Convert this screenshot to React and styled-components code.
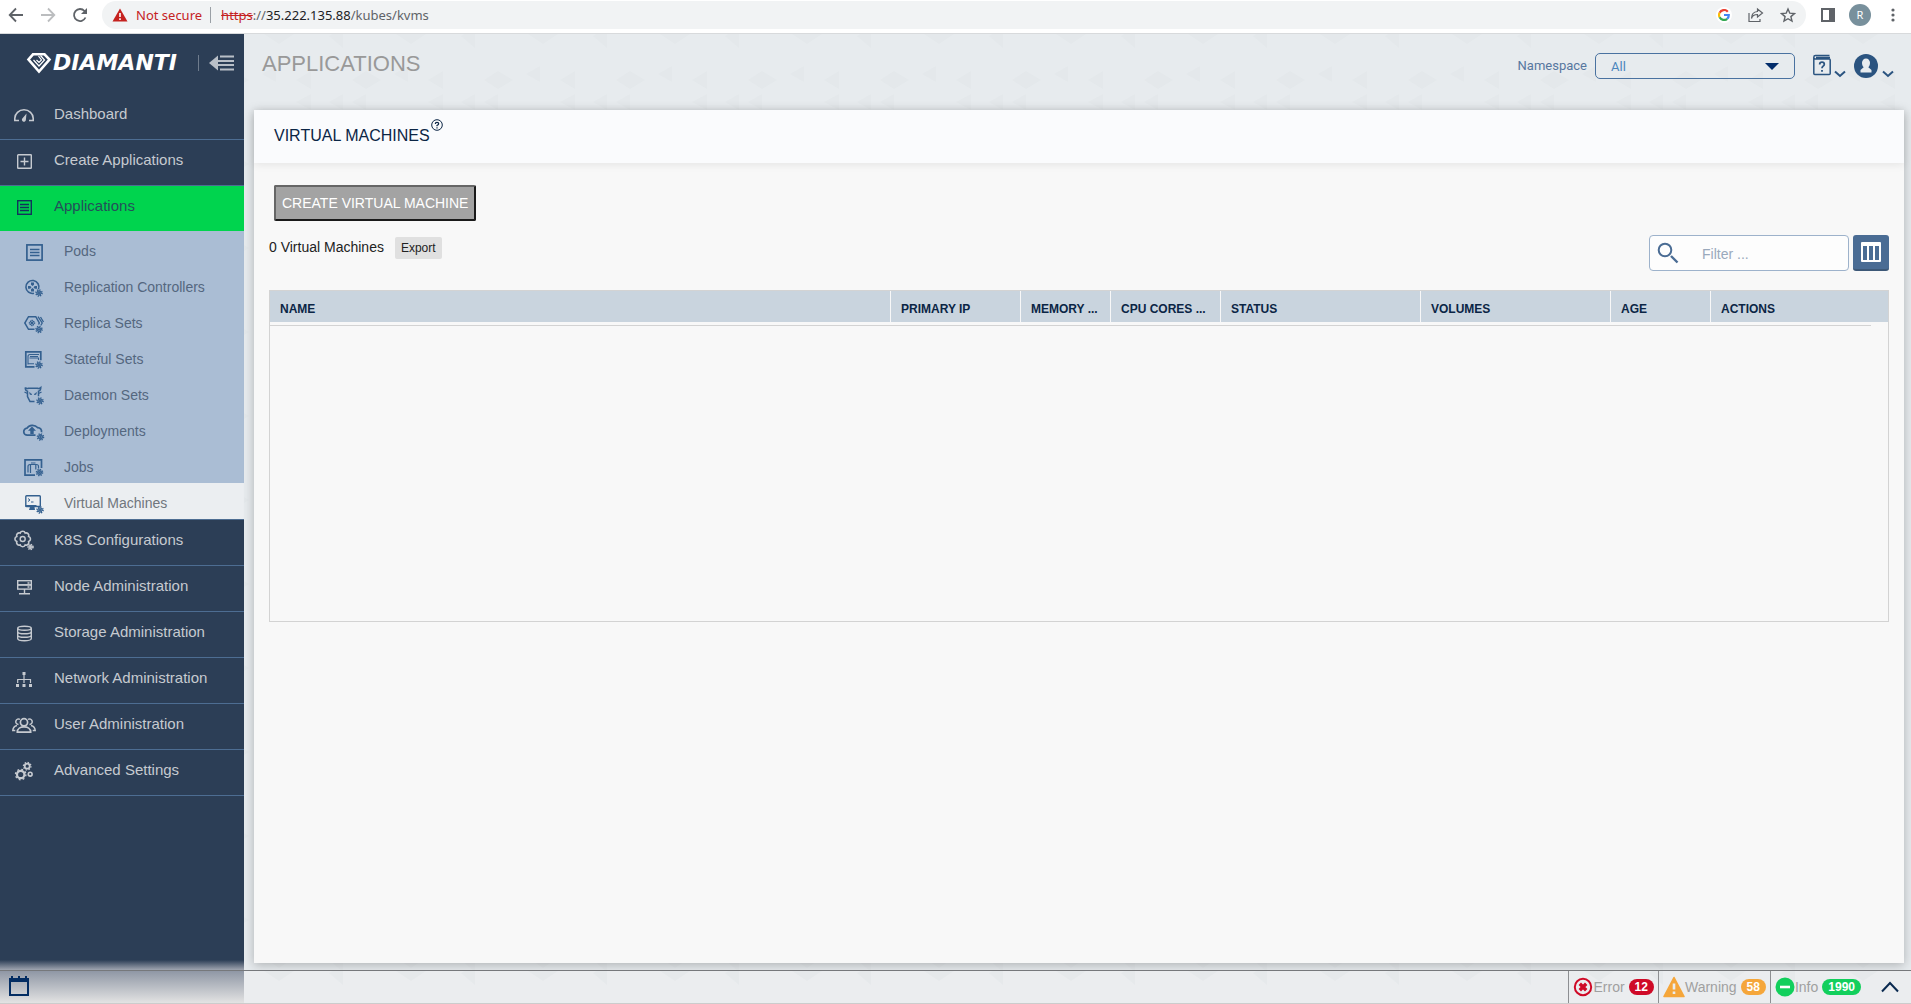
import styled, { createGlobalStyle, css } from 'styled-components'

const GlobalStyle = createGlobalStyle`
  *, *::before, *::after { box-sizing: border-box; }
  body {
    margin: 0;
    font-family: "Liberation Sans", Arial, sans-serif;
    font-size: 14px;
    color: #222;
  }
  a { color: inherit; text-decoration: none; }
  button { font-family: inherit; cursor: pointer; }
  ul { list-style: none; margin: 0; padding: 0; }
  svg { display: block; flex: none; }
`

// small helm wheel shown in the corner of the kubernetes icons
const Helm = ({ x = 17, y = 18, r = 3 }) => (
  <g transform={`translate(${x} ${y})`} strokeWidth="1">
    <circle r={r - 1} />
    <circle r={r} strokeDasharray="1.2 1.16" strokeWidth="1.6" />
    <path d={`M0-${r}V${r}M-${r} 0H${r}M-2-2L2 2M2-2L-2 2`} strokeWidth=".8" />
  </g>
)

const icons = {
  dashboard: (
    <g>
      <path d="M7 16.5H2.8v-2.2A9 8.3 0 0 1 21.2 14.3v2.2H17" strokeWidth="1.6" />
      <path d="M14.500 9.500l-.6 6.200a2 2 0 1 1-3.100-1.700z" fill="currentColor" stroke="none" />
    </g>
  ),
  create: (
    <g strokeWidth="1.400">
      <rect x="5.700" y="4.700" width="13.600" height="13.600" rx=".6" />
      <path d="M12.500 7.500v8M8.500 11.500h8" />
    </g>
  ),
  apps: (
    <g strokeWidth="1.400">
      <rect x="5.700" y="4.700" width="13.600" height="13.600" />
      <path d="M8 8.500h9M8 11.500h9M8 14.500h9" />
    </g>
  ),
  pods: (
    <g strokeWidth="1.700">
      <rect x="4.900" y="5.900" width="15.200" height="15.200" />
      <path d="M8 10.500h9.500M8 13.500h9.500M8 16.500h9.500" strokeWidth="1.300" />
    </g>
  ),
  replication: (
    <g>
      <path d="M16.500 14.300A6.500 6.500 0 1 0 12 18.300" strokeWidth="1.600" />
      <g fill="currentColor" stroke="none">
        <path d="M9 7.500h3v2.200l-1.500 1.300L9 9.700zM6 11h2.200l1.300 1.300-1.300 1.500H6zM15 11h-2.200l-1.300 1.300 1.300 1.500H15zM9 16.500h3v-2.200L10.500 13 9 14.300z" />
      </g>
      <Helm x={17} y={18} />
    </g>
  ),
  replica: (
    <g>
      <path d="M12.500 18.300H6.500L2.800 12l3.700-6.300h7.300l3.500 6.300-.8 1.500" strokeWidth="1.500" />
      <path d="M16 5.700l4.200 6.300-1.500 2.500M18.500 6l3 5" strokeWidth="1.300" />
      <path d="M10 8.800v6.400M6.800 12h6.400M8 10l4 4M12 10l-4 4" strokeWidth="1" />
      <circle cx="10" cy="12" r="2.600" strokeWidth="1" strokeDasharray="1.200 .8" />
      <Helm x={17} y={18.500} />
    </g>
  ),
  stateful: (
    <g>
      <path d="M12.500 19.800H3.800V4.800h15v8.500" strokeWidth="1.700" />
      <path d="M6 17.500V9.500q0-2 2-2h9M7.500 11h9v2M8 9.500h8M6.500 16.800h5.500" strokeWidth="1.100" />
      <Helm x={17} y={18} />
    </g>
  ),
  daemon: (
    <g>
      <path d="M3.200 4.500q0 3 2.300 3.800v5.200l2.500 5h4.500M3.200 4.500q1.500 1.500 3.300.7h9q1.800.8 3.300-.7 0 3-2.300 3.800v5" strokeWidth="1.500" />
      <path d="M2.500 9l3 1.500M19.500 9l-3 1.500" strokeWidth="1.300" />
      <path d="M7.500 9.500l2.500 2H8zM14.500 9.500l-2.500 2h2z" fill="currentColor" strokeWidth=".6" />
      <Helm x={18} y={18} />
    </g>
  ),
  deployments: (
    <g>
      <path d="M13.500 16.200H5.500a3.500 3.500 0 0 1-.5-7 6 5 0 0 1 10.500-.6 3.800 3.800 0 0 1 4 4.600" strokeWidth="1.700" />
      <path d="M10 7.500l4 4.200h-2.300V15H8.300v-3.300H6z" fill="currentColor" stroke="none" />
      <Helm x={18.500} y={18} />
    </g>
  ),
  jobs: (
    <g>
      <path d="M13 20.100H3V4.900h16.500v8" strokeWidth="1.700" />
      <path d="M6 17.500v-6q0-2 2-2h6.500q2 0 2 2v2M8.500 9.500V18M13.800 9.500v5M9 8h4.500" strokeWidth="1.200" />
      <Helm x={17.500} y={17.500} />
    </g>
  ),
  vms: (
    <g>
      <rect x="3.800" y="4.800" width="14.500" height="10.700" rx=".8" strokeWidth="1.400" />
      <path d="M3.500 14h11v2h-2l.5 3H7l1-3H3.500z" fill="currentColor" stroke="none" />
      <path d="M6 7.500l2 1.500-2 1.500M9 11h2.500" strokeWidth="1" />
      <Helm x={18} y={19} />
    </g>
  ),
  k8s: (
    <g>
      <path d="M8.200 3.100a2.600 2.600 0 0 1 5 0 2.600 2.600 0 0 1 3.400 3.400 2.600 2.600 0 0 1 0 5 2.600 2.600 0 0 1-3.400 3.400 2.600 2.600 0 0 1-5 0 2.600 2.600 0 0 1-3.400-3.400 2.600 2.600 0 0 1 0-5 2.600 2.600 0 0 1 3.400-3.400z" strokeWidth="1.600" />
      <circle cx="10.700" cy="9" r="2.500" strokeWidth="1.400" />
      <Helm x={18.500} y={17} r={2.500} />
    </g>
  ),
  node: (
    <g strokeWidth="1.400">
      <rect x="5.700" y="4.700" width="13.600" height="4.200" />
      <rect x="5.700" y="8.900" width="13.600" height="4.200" />
      <path d="M12.500 13v5M7 17.700h11M15.500 7h2M15.500 11h2" />
    </g>
  ),
  storage: (
    <g strokeWidth="1.400">
      <ellipse cx="12.500" cy="6.200" rx="6.800" ry="2" />
      <path d="M5.700 6.200v10.300c0 3 13.600 3 13.600 0V6.200M5.700 9.700c0 2.800 13.600 2.800 13.600 0M5.700 13.200c0 2.800 13.600 2.800 13.600 0" />
    </g>
  ),
  network: (
    <g>
      <path d="M12 6v6M5.700 15v-3.500h12.800V15M12 11v4" strokeWidth="1.200" />
      <path d="M10.500 4h3v3h-3zM4 16h3v3H4zM10.500 16h3v3h-3zM17 16h3v3h-3z" fill="currentColor" stroke="none" />
    </g>
  ),
  users: (
    <g strokeWidth="1.700">
      <circle cx="12" cy="8.300" r="3.600" />
      <path d="M5.300 18.200c0-7 13.400-7 13.400 0z" />
      <path d="M8 5.300a2.800 2.800 0 1 0-1.500 5.200M16 5.300a2.800 2.800 0 1 1 1.500 5.200M5 11.500q-4 1-4.200 5h2.500M19 11.500q4 1 4.200 5h-2.500" strokeWidth="1.500" />
    </g>
  ),
  settings: (
    <g>
      <circle cx="8.700" cy="14.500" r="3.700" strokeWidth="2.200" />
      <circle cx="8.700" cy="14.500" r="5.200" strokeWidth="1.400" strokeDasharray="1.800 2.280" />
      <circle cx="15.200" cy="6.200" r="2.500" strokeWidth="1.800" />
      <circle cx="15.200" cy="6.200" r="3.800" strokeWidth="1.200" strokeDasharray="1.400 1.580" />
      <circle cx="18.200" cy="14.200" r="1.900" strokeWidth="1.600" />
    </g>
  ),
}

const Glyph = ({ name }) => (
  <svg width="24" height="24" viewBox="0 0 24 24" fill="none" stroke="currentColor" aria-hidden="true">
    {icons[name]}
  </svg>
)

const resources = [
  { icon: 'pods', label: 'Pods' },
  { icon: 'replication', label: 'Replication Controllers' },
  { icon: 'replica', label: 'Replica Sets' },
  { icon: 'stateful', label: 'Stateful Sets' },
  { icon: 'daemon', label: 'Daemon Sets' },
  { icon: 'deployments', label: 'Deployments' },
  { icon: 'jobs', label: 'Jobs' },
  { icon: 'vms', label: 'Virtual Machines', current: true },
]

const menu = [
  { icon: 'dashboard', label: 'Dashboard' },
  { icon: 'create', label: 'Create Applications' },
  { icon: 'apps', label: 'Applications', active: true, children: resources },
  { icon: 'k8s', label: 'K8S Configurations' },
  { icon: 'node', label: 'Node Administration' },
  { icon: 'storage', label: 'Storage Administration' },
  { icon: 'network', label: 'Network Administration' },
  { icon: 'users', label: 'User Administration' },
  { icon: 'settings', label: 'Advanced Settings' },
]

const columns = [
  { label: 'NAME' },
  { label: 'PRIMARY IP', width: 130 },
  { label: 'MEMORY (GB)', short: 'MEMORY ...', width: 90 },
  { label: 'CPU CORES (CORES)', short: 'CPU CORES ...', width: 110 },
  { label: 'STATUS', width: 200 },
  { label: 'VOLUMES', width: 190 },
  { label: 'AGE', width: 100 },
  { label: 'ACTIONS', width: 160 },
]

const BrowserBar = () => (
  <Browser>
    <NavButtons>
      <IconButton aria-label="Back">
        <svg width="16" height="16" viewBox="0 0 16 16" fill="none" stroke="#5f6368" strokeWidth="1.800"><path d="M15 8H2M8 1.500L1.700 8 8 14.500" /></svg>
      </IconButton>
      <IconButton aria-label="Forward">
        <svg width="16" height="16" viewBox="0 0 16 16" fill="none" stroke="#bbbdbf" strokeWidth="1.800"><path d="M1 8h13M8 1.500L14.300 8 8 14.500" /></svg>
      </IconButton>
      <IconButton aria-label="Reload">
        <svg width="16" height="16" viewBox="0 0 16 16" fill="none" stroke="#5f6368" strokeWidth="1.800"><path d="M13.500 10.500A6 6 0 1 1 12.500 4L14 5.800" /><path d="M15 1v6H9z" fill="#5f6368" stroke="none" /></svg>
      </IconButton>
    </NavButtons>
    <AddressBar>
      <svg width="16" height="14" viewBox="0 0 16 14"><path d="M8 .5L15.500 13.500H.5z" fill="#c5221f" /><path d="M8 5v4M8 10.300v1.700" stroke="#fff" strokeWidth="1.600" /></svg>
      <NotSecure>Not secure</NotSecure>
      <Url><s>https</s>://<b>35.222.135.88</b>/kubes/kvms</Url>
      <AddressActions>
        <IconButton aria-label="Google">
          <GoogleDot>
            <svg width="12" height="12" viewBox="0 0 12 12" fill="none" strokeWidth="2.200">
              <path d="M9.800 2.700A5 5 0 0 0 1.600 3.700" stroke="#ea4335" />
              <path d="M1.600 3.700a5 5 0 0 0 0 4.600" stroke="#fbbc05" />
              <path d="M1.600 8.300a5 5 0 0 0 7.600 1.500" stroke="#34a853" />
              <path d="M9.200 9.800A5 5 0 0 0 10.800 6H6" stroke="#4285f4" />
            </svg>
          </GoogleDot>
        </IconButton>
        <IconButton aria-label="Share">
          <svg width="16" height="16" viewBox="0 0 16 16" fill="none" stroke="#5f6368" strokeWidth="1.200"><path d="M1 6v8.500h11V12M9.500 2l5 4-5 4V7.500q-5 0-6 4Q3.500 5 9.500 4.500z" /></svg>
        </IconButton>
        <IconButton aria-label="Bookmark">
          <svg width="16" height="16" viewBox="0 0 16 16" fill="none" stroke="#5f6368" strokeWidth="1.400"><path d="M8 2l1.800 4.200 4.600.4-3.500 3 1.100 4.500L8 11.700l-4 2.400 1.100-4.500-3.500-3 4.600-.4z" /></svg>
        </IconButton>
      </AddressActions>
    </AddressBar>
    <IconButton aria-label="Side panel">
      <svg width="16" height="16" viewBox="0 0 16 16"><path d="M1 1h14v14H1zM3 3v10h6V3z" fill="#5f6368" fillRule="evenodd" /></svg>
    </IconButton>
    <Avatar aria-label="Profile">R</Avatar>
    <IconButton aria-label="Menu">
      <svg width="4" height="16" viewBox="0 0 4 16" fill="#5f6368"><circle cx="2" cy="3" r="1.600" /><circle cx="2" cy="8" r="1.600" /><circle cx="2" cy="13" r="1.600" /></svg>
    </IconButton>
  </Browser>
)

const Sidebar = () => (
  <Side>
    <SideHeader>
      <Brand href="#">
        <svg width="26" height="22" viewBox="0 0 26 22" fill="none" stroke="#fff">
          <path d="M7 2.300h11.500L23.500 7.500 13 19.500 2.500 7.500z" strokeWidth="2.600" />
          <path d="M7.500 8l5.500 6 5.500-6-4-4.500M10.500 8l2.500 2.500L15.500 8l-3-4" strokeWidth="1.200" />
        </svg>
        <BrandName>DIAMANTI</BrandName>
      </Brand>
      <Collapse aria-label="Collapse menu">
        <svg width="26" height="16" viewBox="0 0 26 16"><path d="M0 8L9 .5v15z" fill="#b9bfc7" /><path d="M11 1.500h14M9 6h16M9 10h16M11 14.500h14" stroke="#b9bfc7" strokeWidth="2" /></svg>
      </Collapse>
    </SideHeader>
    <nav>
      <ul>
        {menu.map(({ icon, label, active, children }) => (
          <MenuItem key={label}>
            <MenuLink href="#" $active={active}>
              <Glyph name={icon} />
              <span>{label}</span>
            </MenuLink>
            {children && (
              <SubMenu>
                {children.map((item) => (
                  <li key={item.label}>
                    <SubLink href="#" $current={item.current}>
                      <Glyph name={item.icon} />
                      <span>{item.label}</span>
                    </SubLink>
                  </li>
                ))}
              </SubMenu>
            )}
          </MenuItem>
        ))}
      </ul>
    </nav>
  </Side>
)

const Chevron = () => (
  <svg width="12" height="8" viewBox="0 0 12 8" fill="none" stroke="#2b5480" strokeWidth="2"><path d="M1 1.500l5 4.500 5-4.500" /></svg>
)

const TopBar = () => (
  <Top>
    <PageTitle>APPLICATIONS</PageTitle>
    <NamespaceLabel htmlFor="namespace">Namespace</NamespaceLabel>
    <NamespaceSelect id="namespace" defaultValue="all">
      <option value="all">All</option>
    </NamespaceSelect>
    <TopButton aria-label="Help">
      <svg width="20" height="24" viewBox="0 0 20 24" fill="none" stroke="#2b5480">
        <path d="M1.800 3.500V19.500q0 1 1 1h14.400q1 0 1-1V6q0-1-1-1H3.500Q1.800 5 1.800 3.300 1.800 1.600 3.500 1.600H17.500M4 3.500h14" strokeWidth="1.500" />
        <path d="M7.700 10.500q0-2.300 2.300-2.300t2.300 2q0 1.300-1.300 2-1 .6-1 2M10 16v1.800" strokeWidth="1.800" />
      </svg>
      <Chevron />
    </TopButton>
    <TopButton aria-label="Account">
      <svg width="24" height="24" viewBox="0 0 24 24"><circle cx="12" cy="12" r="12" fill="#2b5480" /><path d="M12 4.500a4 4.300 0 0 0-4 4.300c0 2 .8 3.500 1.700 4.500L6.500 16v2.500h11V16l-3.200-2.700c.9-1 1.700-2.500 1.700-4.500a4 4.300 0 0 0-4-4.300z" fill="#e8ecef" /></svg>
      <Chevron />
    </TopButton>
  </Top>
)

const MachineTable = () => (
  <TableBox>
    <Table>
      <colgroup>
        {columns.map(({ label, width }) => <col key={label} width={width} />)}
        <col width="17" />
      </colgroup>
      <thead>
        <tr>
          {columns.map(({ label, short }) => <th key={label} title={label}>{short || label}</th>)}
          <th aria-hidden="true"></th>
        </tr>
      </thead>
      <tbody>
        <tr>
          <td colSpan={columns.length}></td>
        </tr>
      </tbody>
    </Table>
  </TableBox>
)

const StatusBar = () => (
  <Footer>
    <FooterSide>
      <IconButton aria-label="Events">
        <svg width="20" height="20" viewBox="0 0 20 20"><path d="M2 0h2v2h5V0h2v2h5V0h2v2h2v18H0V2h2zM2 6v12h16V6z" fill="#032d63" fillRule="evenodd" /></svg>
      </IconButton>
    </FooterSide>
    <FooterMain>
      <Status>
        <svg width="20" height="20" viewBox="0 0 20 20"><circle cx="10" cy="10" r="8.200" fill="none" stroke="#cf0a27" strokeWidth="2" /><path d="M6.800 6.800l6.400 6.400M13.200 6.800l-6.400 6.400" stroke="#cf0a27" strokeWidth="3.400" /></svg>
        Error <Badge $color="#cf0a27">12</Badge>
      </Status>
      <Status>
        <svg width="22" height="22" viewBox="0 0 22 22"><path d="M11 1.500L21 20.500H1z" fill="#f5a63a" stroke="#f5a63a" strokeWidth="1.600" strokeLinejoin="round" /><path d="M11 7.500v6M11 15.500v2.500" stroke="#e9edf0" strokeWidth="2.600" /></svg>
        Warning <Badge $color="#f5a63a">58</Badge>
      </Status>
      <Status>
        <svg width="20" height="20" viewBox="0 0 20 20"><circle cx="10" cy="10" r="9.500" fill="#12cf5c" /><path d="M5 10h10" stroke="#fff" strokeWidth="2.600" /></svg>
        Info <Badge $color="#12cf5c">1990</Badge>
      </Status>
      <IconButton aria-label="Expand">
        <svg width="18" height="12" viewBox="0 0 18 12" fill="none" stroke="#0a2a50" strokeWidth="2"><path d="M1 10.500L9 2l8 8.500" /></svg>
      </IconButton>
    </FooterMain>
  </Footer>
)

export default function App() {
  return (
    <Page>
      <GlobalStyle />
      <BrowserBar />
      <Workspace>
        <Sidebar />
        <Main>
          <TopBar />
          <Panel>
            <PanelHeader>
              <PanelTitle>VIRTUAL MACHINES</PanelTitle>
              <HelpButton aria-label="About virtual machines">
                <svg width="12" height="12" viewBox="0 0 12 12" fill="none" stroke="#0b2545"><circle cx="6" cy="6" r="5.300" /><path d="M4.300 5q0-1.700 1.700-1.700T7.700 4.800Q7.700 5.700 6 6.500v.8M6 8.200v1.300" strokeWidth="1.200" /></svg>
              </HelpButton>
            </PanelHeader>
            <PanelBody>
              <CreateButton>CREATE VIRTUAL MACHINE</CreateButton>
              <Toolbar>
                <Summary>
                  <span>0 Virtual Machines</span>
                  <ExportButton>Export</ExportButton>
                </Summary>
                <FilterBox>
                  <svg width="22" height="22" viewBox="0 0 22 22" fill="none" stroke="#4a6c94"><circle cx="8" cy="8" r="6.300" strokeWidth="2" /><path d="M14 14l6.500 6.500" strokeWidth="2.400" /></svg>
                  <input type="text" placeholder="Filter ..." aria-label="Filter" />
                </FilterBox>
                <ColumnsButton aria-label="Choose columns">
                  <svg width="20" height="20" viewBox="0 0 20 20"><path d="M1 0h18q1 0 1 1v18q0 1-1 1H1q-1 0-1-1V1q0-1 1-1zM2 4v14h4V4zM8 4v14h4V4zM14 4v14h4V4z" fill="#fff" fillRule="evenodd" /></svg>
                </ColumnsButton>
              </Toolbar>
              <MachineTable />
            </PanelBody>
          </Panel>
        </Main>
      </Workspace>
      <StatusBar />
    </Page>
  )
}

const pattern = css`
  background-color: #e7ebee;
  background-image: url("data:image/svg+xml,%3Csvg xmlns='http://www.w3.org/2000/svg' width='132' height='84'%3E%3Cg fill='%23dfe4e7' fill-opacity='.4'%3E%3Cpath d='M20 0h30L35 10zM85 2l14-8v20zM18 40l14-8v16zM52 46l15-9v18zM108 46l14-9 15 9-15 9zM-24 46l14-9 15 9-15 9zM52 68l15-8v16zM85 68l14-8v16zM108 68l14-8v16z'/%3E%3C/g%3E%3C/svg%3E");
`

const Page = styled.div`
  display: flex;
  flex-direction: column;
  min-height: 100vh;
`

const IconButton = styled.button`
  display: flex;
  align-items: center;
  padding: 0;
  border: none;
  background: none;
`

const Browser = styled.header`
  display: flex;
  align-items: center;
  height: 34px;
  padding: 0 16px 4px 8px;
  border-bottom: 1px solid #d8dadc;
  background-color: #fff;
  font-family: "Noto Sans", "Open Sans", sans-serif;
  font-size: 13px;
`

const NavButtons = styled.div`
  display: flex;
  gap: 16px;
  margin-right: 14px;
`

const AddressBar = styled.div`
  display: flex;
  flex: 1;
  align-items: center;
  height: 28px;
  margin-right: 14px;
  padding: 0 10px;
  border-radius: 14px;
  background-color: #f1f3f4;
`

const NotSecure = styled.span`
  margin-left: 8px;
  padding-right: 8px;
  border-right: 1px solid #9aa0a6;
  line-height: 16px;
  color: #c5221f;
`

const Url = styled.span`
  flex: 1;
  margin-left: 10px;
  color: #5f6368;

  s { color: #c5221f; }
  b { font-weight: 400; color: #202124; }
`

const AddressActions = styled.div`
  display: flex;
  align-items: center;
  gap: 16px;
`

const GoogleDot = styled.span`
  padding: 2px;
  border-radius: 50%;
  background-color: #fff;
`

const Avatar = styled.button`
  width: 22px;
  height: 22px;
  margin: 0 20px 0 13px;
  padding: 0;
  border: none;
  border-radius: 50%;
  background-color: #78909c;
  font-size: 11px;
  color: #fff;
`

const Workspace = styled.div`
  display: flex;
  flex: 1;
`

const Side = styled.aside`
  flex: none;
  width: 244px;
  background: linear-gradient(to top, #a0a5b0, #2c3e56 10px);
  color: #c6cad0;
`

const SideHeader = styled.div`
  display: flex;
  align-items: center;
  height: 60px;
  padding: 0 9px 2px 26px;
`

const Brand = styled.a`
  display: flex;
  flex: 1;
  align-items: center;
  gap: 1px;
`

const BrandName = styled.span`
  font: italic bold 22px/22px "DejaVu Sans", sans-serif;
  color: #fff;
`

const Collapse = styled(IconButton)`
  padding-left: 10px;
  border-left: 1px solid #6f7c8d;
`

const MenuItem = styled.li`
  border-bottom: 1px solid #4d6d92;
`

const MenuLink = styled.a`
  display: flex;
  align-items: center;
  gap: 18px;
  height: 45px;
  padding: 0 0 2px 12px;
  font-size: 15px;
  background-color: ${({ $active }) => ($active ? '#00d44e' : 'transparent')};
  color: ${({ $active }) => ($active ? '#12335c' : 'inherit')};

  span {
    padding-bottom: 4px;
    color: ${({ $active }) => ($active ? '#24505a' : 'inherit')};
  }
`

const SubMenu = styled.ul`
  background-color: #aabdd4;
`

const SubLink = styled.a`
  display: flex;
  align-items: center;
  gap: 18px;
  height: 36px;
  padding: 4px 0 0 22px;
  background-color: ${({ $current }) => ($current ? '#ebeef1' : 'transparent')};
  color: ${({ $current }) => ($current ? '#70767d' : '#54677f')};

  svg { color: #34608f; }
`

const Main = styled.main`
  ${pattern}
  display: flex;
  flex: 1;
  flex-direction: column;
  min-width: 0;
  padding: 0 7px 7px 10px;
`

const Top = styled.div`
  display: flex;
  align-items: center;
  height: 76px;
  padding: 0 10px 12px 8px;
`

const PageTitle = styled.h1`
  flex: 1;
  margin: 0;
  padding-bottom: 4px;
  font-size: 22px;
  font-weight: 400;
  color: #999;
`

const NamespaceLabel = styled.label`
  margin-right: 8px;
  padding-bottom: 2px;
  font-family: Roboto, sans-serif;
  font-size: 13px;
  color: #57779f;
`

const NamespaceSelect = styled.select`
  appearance: none;
  width: 200px;
  height: 26px;
  margin-right: 17px;
  padding: 0 15px;
  border: 1px solid #4a72a0;
  border-radius: 5px;
  background: url("data:image/svg+xml,%3Csvg xmlns='http://www.w3.org/2000/svg' width='14' height='7'%3E%3Cpath d='M0 0h14L7 7z' fill='%23032d6b'/%3E%3C/svg%3E") no-repeat right 15px center;
  font-family: Roboto, sans-serif;
  font-size: 13px;
  color: #4c86bd;
`

const TopButton = styled(IconButton)`
  align-items: flex-end;
  gap: 2px;
  height: 24px;

  & + & { margin-left: 8px; gap: 4px; }
`

const Panel = styled.section`
  flex: 1;
  background-color: #f8f8f8;
  box-shadow: 0 2px 10px rgba(0, 0, 0, .25);
`

const PanelHeader = styled.div`
  display: flex;
  align-items: flex-start;
  height: 53px;
  padding: 9px 20px;
  background-color: #fafbfd;
  box-shadow: 0 2px 8px rgba(0, 0, 0, .08);
`

const PanelTitle = styled.h2`
  margin: 0 1px 0 0;
  font-size: 16px;
  font-weight: 400;
  line-height: 34px;
  color: #0b2545;
`

const HelpButton = styled(IconButton)`
  align-items: flex-start;
`

const PanelBody = styled.div`
  padding: 22px 15px;
`

const CreateButton = styled.button`
  height: 36px;
  margin-left: 5px;
  padding: 0 6px;
  border: 2px solid;
  border-color: #666 #1a1a1a #1a1a1a #666;
  border-radius: 2px;
  background-color: #a3a3a3;
  font-size: 14px;
  color: #fff;
`

const Toolbar = styled.div`
  display: flex;
  gap: 4px;
  margin: 14px 0 19px;
`

const Summary = styled.div`
  display: flex;
  flex: 1;
  align-items: center;
  gap: 11px;
  height: 26px;

  span { padding-bottom: 2px; }
`

const ExportButton = styled.button`
  height: 22px;
  padding: 0 6px;
  border: none;
  border-radius: 2px;
  background-color: #e0e0e0;
  font-size: 12px;
  color: #222;
`

const FilterBox = styled.div`
  display: flex;
  align-items: center;
  width: 200px;
  height: 36px;
  padding-left: 7px;
  border: 1px solid #9db2cb;
  border-radius: 4px;
  background-color: #fdfdfd;

  input {
    flex: 1;
    min-width: 0;
    padding: 4px 23px 2px;
    border: none;
    outline: none;
    background: none;
    font: 14px "Liberation Sans", Arial, sans-serif;
  }
  input::placeholder { color: #9aa9bc; }
`

const ColumnsButton = styled.button`
  display: flex;
  align-items: center;
  justify-content: center;
  width: 36px;
  height: 36px;
  padding: 0;
  border: none;
  border-bottom: 2px solid #3d5877;
  border-radius: 3px;
  background-color: #4a6c94;
`

const TableBox = styled.div`
  min-height: 332px;
  border: 1px solid #d3d3d3;
`

const Table = styled.table`
  width: 100%;
  table-layout: fixed;
  border-spacing: 0;

  th {
    height: 31px;
    padding: 5px 10px 0;
    border-right: 1px solid #f8f8f8;
    background-color: #c9d4de;
    font-size: 12px;
    text-align: left;
    white-space: nowrap;
    color: #0b2545;
  }
  th:nth-last-child(-n + 2) { border-right-color: #c9d4de; }
  td {
    height: 4px;
    padding: 0;
    border-bottom: 1px solid #d3d3d3;
  }
`

const Footer = styled.footer`
  display: flex;
  height: 34px;
  border-top: 1px solid #76787b;
  border-bottom: 1px solid #ccc;
`

const FooterSide = styled.div`
  display: flex;
  align-items: center;
  width: 244px;
  padding: 0 0 2px 9px;
  background: linear-gradient(#8f97a5, #e3e3e3);
`

const FooterMain = styled.div`
  ${pattern}
  display: flex;
  flex: 1;
  justify-content: flex-end;
  padding-right: 12px;
  background-color: #ebedef;
`

const Status = styled.div`
  display: flex;
  align-items: center;
  padding: 0 4px;
  border-left: 1px solid #8d8f92;
  color: #a0a0a0;

  &:nth-child(3) { padding-right: 20px; }
`

const Badge = styled.span`
  margin-left: 4px;
  padding: 0 6px;
  border-radius: 8px;
  background-color: ${({ $color }) => $color};
  font-size: 12px;
  font-weight: 700;
  line-height: 16px;
  color: #fff;
`
